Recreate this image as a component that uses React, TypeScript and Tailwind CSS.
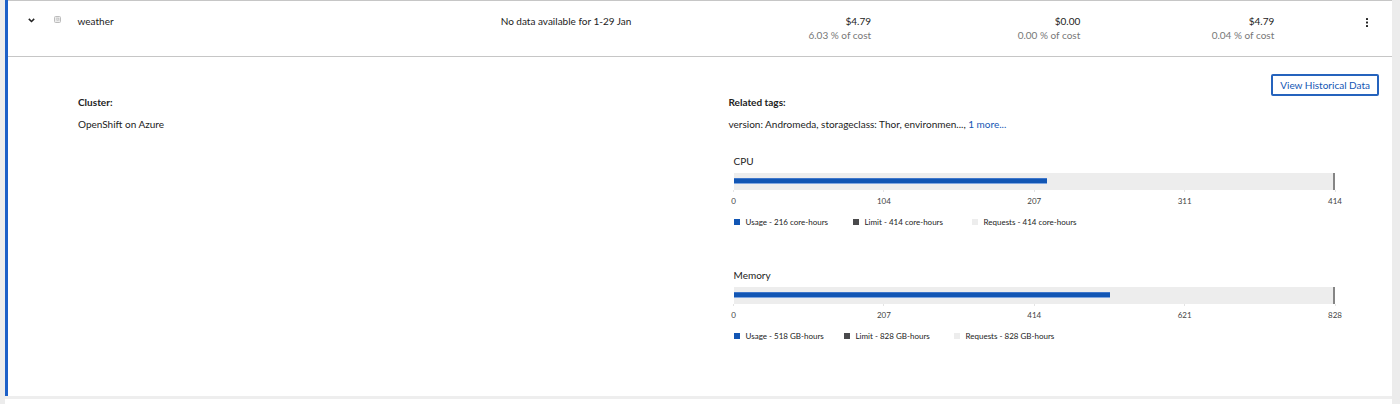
import React from 'react';

type Metric = {
  name: string;
  unit: string;
  usage: number;
  limit: number;
  requests: number;
  ticks: number[];
  legendCols: string;
};

const metrics: Metric[] = [
  {
    name: 'CPU',
    unit: 'core-hours',
    usage: 216,
    limit: 414,
    requests: 414,
    ticks: [0, 104, 207, 311, 414],
    legendCols: 'grid-cols-[119px_119px_auto]',
  },
  {
    name: 'Memory',
    unit: 'GB-hours',
    usage: 518,
    limit: 828,
    requests: 828,
    ticks: [0, 207, 414, 621, 828],
    legendCols: 'grid-cols-[110px_110px_auto]',
  },
];

const costs = [
  { amount: '$4.79', share: '6.03 % of cost' },
  { amount: '$0.00', share: '0.00 % of cost' },
  { amount: '$4.79', share: '0.04 % of cost' },
];

function LegendItem({ color, children }: { color: string; children: React.ReactNode }) {
  return (
    <li className="flex items-center gap-1.5 whitespace-nowrap">
      <span className={`size-1.5 shrink-0 ${color}`} />
      <span>{children}</span>
    </li>
  );
}

function UsageChart({ metric }: { metric: Metric }) {
  const { name, unit, usage, limit, requests, ticks, legendCols } = metric;
  return (
    <section className="ml-[5px] mr-11">
      <h3 className="mb-1 text-[10px] leading-4 text-[#222]">{name}</h3>
      <div className="relative h-[17px] bg-[#ededed] pt-[5px]">
        <div
          className="h-1.5 border-y border-t-[#3f77cb] border-b-[#7fa6e0] bg-[#1256b4]"
          style={{ width: `${(usage / limit) * 100}%` }}
        />
        <div className="absolute inset-y-0 right-0 w-0.5 bg-[#858585]" />
      </div>
      <ol className="flex justify-between text-[8px] leading-3 text-[#444]">
        {ticks.map((tick) => (
          <li key={tick} className="flex w-0 flex-col items-center">
            <span className="mb-[3px] h-0.5 w-px bg-[#e4e4e4]" />
            {tick}
          </li>
        ))}
      </ol>
      <ul className={`mt-[9px] grid text-[8px] leading-3 text-[#222] ${legendCols}`}>
        <LegendItem color="bg-[#1256b4]">{`Usage - ${usage} ${unit}`}</LegendItem>
        <LegendItem color="bg-[#4a4a4c]">{`Limit - ${limit} ${unit}`}</LegendItem>
        <LegendItem color="bg-[#ededed]">{`Requests - ${requests} ${unit}`}</LegendItem>
      </ul>
    </section>
  );
}

export default function App() {
  return (
    <div className="bg-[#ececec] pl-[5px] pr-2 font-['Lato','Liberation_Sans',sans-serif] text-[10px] leading-4 text-[#222]">
      <div className="bg-white pb-[5px]">
        <table className="w-full table-fixed border-collapse">
          <colgroup>
            <col className="w-[45px]" />
            <col className="w-[26px]" />
            <col />
            <col className="w-[17.3%]" />
            <col className="w-[17.3%]" />
            <col className="w-[15.1%]" />
            <col className="w-[14%]" />
            <col className="w-[8.5%]" />
          </colgroup>
          <tbody>
            <tr className="h-14 border-y border-[#c6c6c6] align-top">
              <td className="border-l-[3px] border-l-[#1c60c8] pl-5 pt-[11px]">
                <button type="button" aria-label="Collapse row" aria-expanded="true" className="flex h-4 items-center">
                  <svg width="7" height="5" viewBox="0 0 7 5" fill="none" stroke="#222" strokeWidth="1.5">
                    <path d="M0.8 0.9 L3.5 3.5 L6.2 0.9" />
                  </svg>
                </button>
              </td>
              <td className="pl-0.5 pt-[15px]">
                <svg width="7" height="7" viewBox="0 0 7 7" fill="none" aria-hidden="true">
                  <rect x="0.5" y="0.5" width="6" height="6" rx="1" fill="#ededed" stroke="#bcbcbc" />
                  <path d="M2 2.2h2.8v2.6M2.2 3.8h1.2v1" stroke="#b4b4b4" strokeWidth="0.7" />
                </svg>
              </td>
              <td className="pt-3">weather</td>
              <td className="whitespace-nowrap pt-3 text-right">No data available for 1-29 Jan</td>
              {costs.map((cost, i) => (
                <td key={i} className="whitespace-nowrap pt-[13px] text-right">
                  <div className="leading-[14px]">{cost.amount}</div>
                  <div className="leading-[14px] text-[#777]">{cost.share}</div>
                </td>
              ))}
              <td className="pr-[22px] pt-3">
                <button type="button" aria-label="Actions" className="ml-auto flex h-[18px] items-center">
                  <svg width="6" height="9" viewBox="0 0 6 9" fill="#222">
                    <rect x="2" y="0" width="2" height="2" rx="0.5" />
                    <rect x="2" y="3.5" width="2" height="2" rx="0.5" />
                    <rect x="2" y="7" width="2" height="2" rx="0.5" />
                  </svg>
                </button>
              </td>
            </tr>
            <tr>
              <td colSpan={8} className="border-l-[3px] border-l-[#1c60c8] pb-[54px] pl-[70px] pr-[13px] pt-[17px]">
                <div className="flex justify-end">
                  <button
                    type="button"
                    className="h-[22px] rounded-[2px] border-2 border-[#2563bd] px-[7px] leading-4 text-[#1256b4]"
                  >
                    View Historical Data
                  </button>
                </div>
                <div className="grid grid-cols-2">
                  <div>
                    <h2 className="font-bold leading-3">Cluster:</h2>
                    <p className="mt-2">OpenShift on Azure</p>
                  </div>
                  <div>
                    <h2 className="font-bold leading-3">Related tags:</h2>
                    <p className="mt-2">
                      version: Andromeda, storageclass: Thor, environmen...,{' '}
                      <a href="#tags" className="text-[#1256b4]">
                        1 more...
                      </a>
                    </p>
                    <div className="mt-[21px] flex flex-col gap-[39px]">
                      {metrics.map((metric) => (
                        <UsageChart key={metric.name} metric={metric} />
                      ))}
                    </div>
                  </div>
                </div>
              </td>
            </tr>
          </tbody>
        </table>
        <div className="h-[3px] bg-[#eeeeee]" />
      </div>
    </div>
  );
}
